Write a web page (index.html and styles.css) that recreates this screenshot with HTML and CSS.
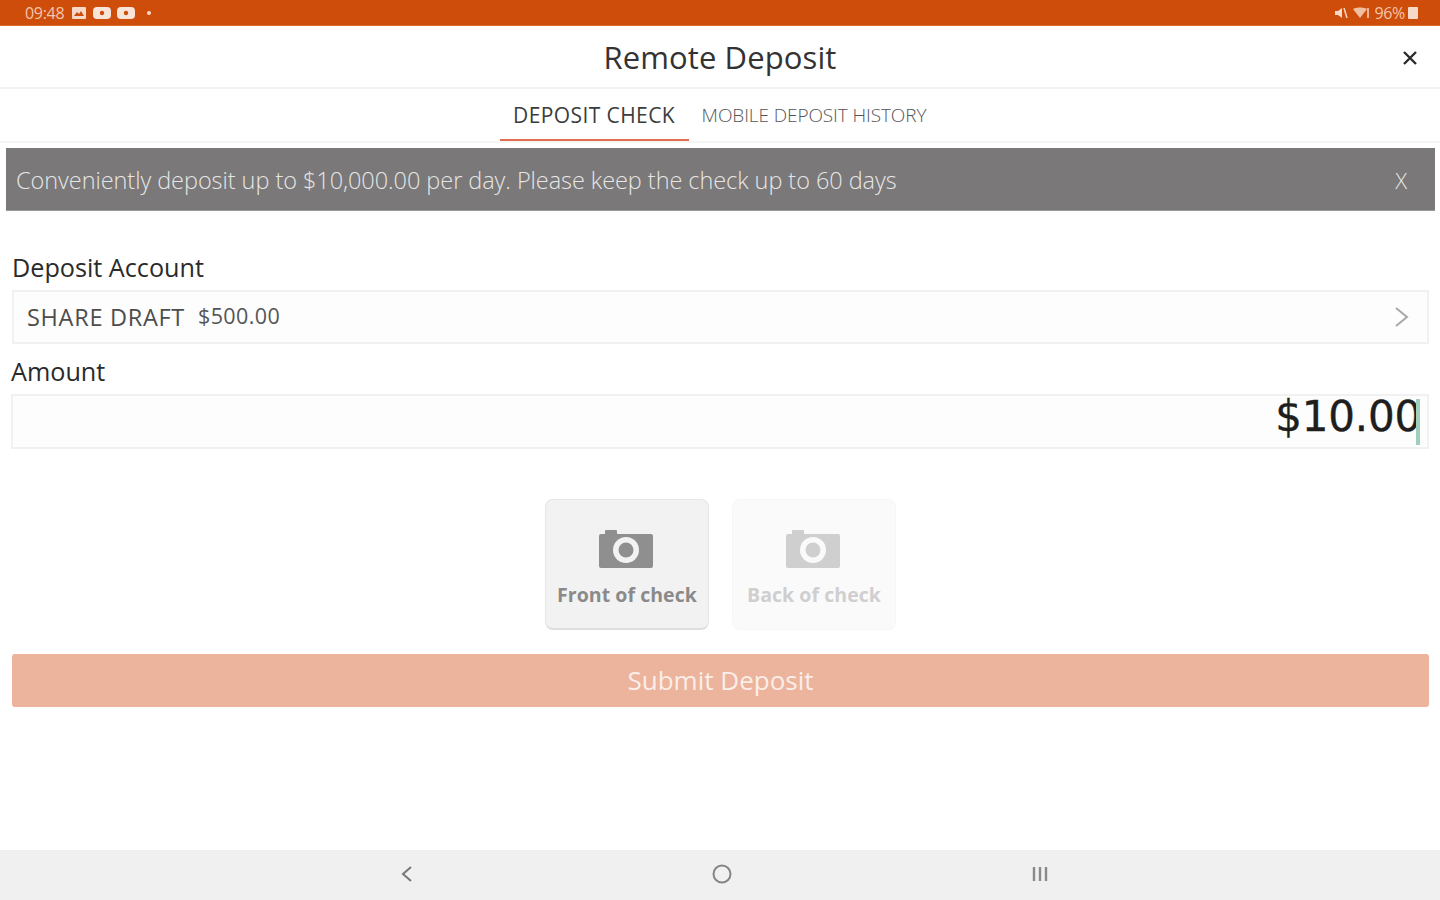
FILE: index.html
```html
<!DOCTYPE html>
<html lang="en">
<head>
<meta charset="utf-8">
<title>Remote Deposit</title>
<link rel="stylesheet" href="styles.css">
</head>
<body>
<div class="app">
  <div class="status">
    <div class="status-group">
      <span class="status-text">09:48</span>
      <svg class="si" width="16" height="14" viewBox="0 0 16 14"><rect x="1" y="1" width="14" height="12" rx="1" fill="#f6d9c8"/><path d="M3 10l3-4 2 2 2-3 3 5z" fill="#cf4d0a"/></svg>
      <svg class="si" width="18" height="14" viewBox="0 0 18 14"><rect x="0" y="1" width="18" height="12" rx="4" fill="#f8e4d8"/><circle cx="9" cy="7" r="2.2" fill="#cf4d0a"/></svg>
      <svg class="si" width="18" height="14" viewBox="0 0 18 14"><rect x="0" y="1" width="18" height="12" rx="4" fill="#f8e4d8"/><circle cx="9" cy="7" r="2.2" fill="#cf4d0a"/></svg>
      <span class="dot"></span>
    </div>
    <div class="status-group right">
      <svg width="14" height="14" viewBox="0 0 14 14"><path d="M1 5h3l4-3v10l-4-3H1z" fill="#f6d9c8"/><path d="M10 2l3 10" stroke="#f6d9c8" stroke-width="1.5"/></svg>
      <svg width="18" height="14" viewBox="0 0 18 14"><path d="M1 3c4-2 10-2 14 0l-7 9z" fill="#f0bfa2"/><path d="M16 2v10" stroke="#f6d9c8" stroke-width="1.5"/></svg>
      <span class="status-text pct">96%</span>
      <span class="battery"></span>
    </div>
  </div>

  <header class="titlebar">
    <h1 class="title">Remote Deposit</h1>
    <svg class="close" width="18" height="18" viewBox="0 0 18 18"><path d="M3 3l12 12M15 3L3 15" stroke="#2b2b2b" stroke-width="2.4" fill="none"/></svg>
  </header>

  <nav class="tabs">
    <div class="tab active">DEPOSIT CHECK</div>
    <div class="tab small">MOBILE DEPOSIT HISTORY</div>
  </nav>

  <div class="banner">
    <span>Conveniently deposit up to $10,000.00 per day. Please keep the check up to 60 days</span>
    <span class="banner-x">X</span>
  </div>

  <main class="form">
    <label class="label first">Deposit Account</label>
    <div class="field select">
      <span class="acct">SHARE DRAFT</span>
      <span class="bal">$500.00</span>
      <svg class="chev" width="16" height="24" viewBox="0 0 16 24"><path d="M2 3l11 9-11 9" stroke="#a8a8a8" stroke-width="2" fill="none"/></svg>
    </div>
    <label class="label second">Amount</label>
    <div class="field amount">
      <span class="amount-val">$10.00</span><span class="caret"></span>
    </div>

    <div class="checks">
      <div class="check front">
        <svg class="cam" width="54" height="39" viewBox="0 0 54 39"><path d="M0 7a2 2 0 0 1 2-2h4V2a1 1 0 0 1 1-1h10a1 1 0 0 1 1 1v3h34a2 2 0 0 1 2 2v30a2 2 0 0 1-2 2H2a2 2 0 0 1-2-2z" fill="#8f8f8f"/><circle cx="27" cy="21" r="13" fill="#f2f2f2"/><circle cx="27" cy="21" r="7.5" fill="#8f8f8f"/></svg>
        <span class="check-label">Front of check</span>
      </div>
      <div class="check back">
        <svg class="cam" width="54" height="39" viewBox="0 0 54 39"><path d="M0 7a2 2 0 0 1 2-2h4V2a1 1 0 0 1 1-1h10a1 1 0 0 1 1 1v3h34a2 2 0 0 1 2 2v30a2 2 0 0 1-2 2H2a2 2 0 0 1-2-2z" fill="#cfcfcf"/><circle cx="27" cy="21" r="13" fill="#fafafa"/><circle cx="27" cy="21" r="7.5" fill="#cfcfcf"/></svg>
        <span class="check-label">Back of check</span>
      </div>
    </div>

    <div class="submit">Submit Deposit</div>
  </main>

  <footer class="nav">
    <svg width="14" height="20" viewBox="0 0 14 20"><path d="M11 3L3 10l8 7" stroke="#777" stroke-width="2" fill="none"/></svg>
    <svg width="22" height="22" viewBox="0 0 22 22"><circle cx="11" cy="11" r="8.5" stroke="#858585" stroke-width="2" fill="none"/></svg>
    <svg width="20" height="18" viewBox="0 0 20 18"><path d="M4 2v14M10 2v14M16 2v14" stroke="#8a8a8a" stroke-width="2.4" fill="none"/></svg>
  </footer>
</div>
</body>
</html>
```
FILE: styles.css
```css
* { box-sizing: border-box; }
html, body { margin: 0; padding: 0; }
body { background: #fff; font-family: "Open Sans", "Liberation Sans", sans-serif; color: #222; }
.app { width: 1440px; height: 900px; display: flex; flex-direction: column; overflow: hidden; }

.status { height: 26px; flex: none; background: #cf4d0a; display: flex; justify-content: space-between; align-items: center; padding: 0 22px 0 25px; border-bottom: 1px solid #d96a30; }
.status-group { display: flex; align-items: center; gap: 6px; }
.status-group.right { gap: 4px; }
.status-text { font-size: 16px; color: #f3c6ab; letter-spacing: -0.3px; margin-right: 1px; }
.dot { width: 4px; height: 4px; border-radius: 50%; background: #f6d9c8; margin-left: 6px; }
.battery { width: 10px; height: 12px; background: #f6d9c8; border-radius: 1px; margin-left: -1px; }
.pct { margin: 0; }

.titlebar { height: 63px; flex: none; display: flex; align-items: center; justify-content: center; border-bottom: 2px solid #f3f3f3; position: relative; }
.title { margin: 0; font-size: 31px; font-weight: 400; color: #333; letter-spacing: 0.1px; }
.close { position: absolute; right: 21px; top: 23px; }

.tabs { height: 54px; flex: none; display: flex; justify-content: center; gap: 1px; border-bottom: 2px solid #f5f5f5; }
.tab { display: flex; align-items: center; justify-content: center; height: 52px; font-size: 21px; color: #4a4a4a; letter-spacing: 0.4px; font-weight: 300; }
.tab.active { width: 189px; border-bottom: 2px solid #df6f50; color: #3c3c3c; font-weight: 400; margin-right: 1px; padding-top: 1px; }
.tab.small { font-size: 19px; color: #555; letter-spacing: -0.1px; padding: 0 14px 0 11px; }

.banner { flex: none; height: 63px; margin: 5px 5px 0 6px; background: #7a7878; color: #e6e6e6; display: flex; align-items: center; justify-content: space-between; padding: 1px 28px 0 10px; font-size: 23.5px; font-weight: 300; letter-spacing: -0.06px; border-bottom: 1px solid #999; }
.banner-x { font-size: 22px; }

.form { flex: 1; padding: 0 11px 0 12px; display: flex; flex-direction: column; }
.label { font-size: 25.2px; line-height: 32px; font-weight: 500; color: #2a2a2a; }
.label.first { margin-top: 40px; }
.label.second { margin-top: 11px; margin-left: -1px; }
.field { height: 54px; border: 2px solid #f1f1f1; background: #fdfdfd; display: flex; align-items: center; }
.select { margin-top: 7px; padding: 0 17px 0 13px; }
.acct { font-size: 23.5px; color: #4d4d4d; letter-spacing: 0.7px; font-weight: 400; }
.bal { font-size: 21.5px; color: #555; margin-left: 13px; margin-top: -3px; letter-spacing: 0.4px; }
.chev { margin-left: auto; }
.amount { margin-top: 7px; margin-left: -1px; height: 55px; justify-content: flex-end; padding-right: 6px; position: relative; }
.amount-val { font-family: "DejaVu Sans", sans-serif; font-size: 42px; line-height: 1; color: #1e1e1e; margin-top: -10px; letter-spacing: -0.2px; -webkit-text-stroke: 0.4px #1e1e1e; }
.caret { position: absolute; right: 7px; top: 3px; width: 4px; height: 46px; background: #9fd0bc; }

.checks { display: flex; justify-content: center; gap: 23px; margin-top: 50px; }
.check { width: 164px; height: 131px; border-radius: 8px; display: flex; flex-direction: column; align-items: center; padding-top: 29px; }
.check.front { background: #f2f2f2; border: 1px solid #e6e6e6; border-bottom: 2px solid #dedede; color: #8a8a8a; }
.check.back { background: #fafafa; border: 1px solid #f6f6f6; color: #cfcfcf; }
.cam { flex: none; margin-right: 2px; }
.check-label { font-size: 19.5px; font-weight: 700; line-height: 26px; margin-top: 14px; white-space: nowrap; letter-spacing: 0.05px; }

.submit { margin-top: 24px; height: 53px; background: #ecb39d; border-radius: 3px; color: #fbeee8; font-size: 26px; font-weight: 400; display: flex; align-items: center; justify-content: center; padding-bottom: 1px; }

.nav { height: 50px; flex: none; background: #f0f0f0; display: flex; align-items: center; padding: 0 0 2px 9px; justify-content: center; gap: 297px; }
```
